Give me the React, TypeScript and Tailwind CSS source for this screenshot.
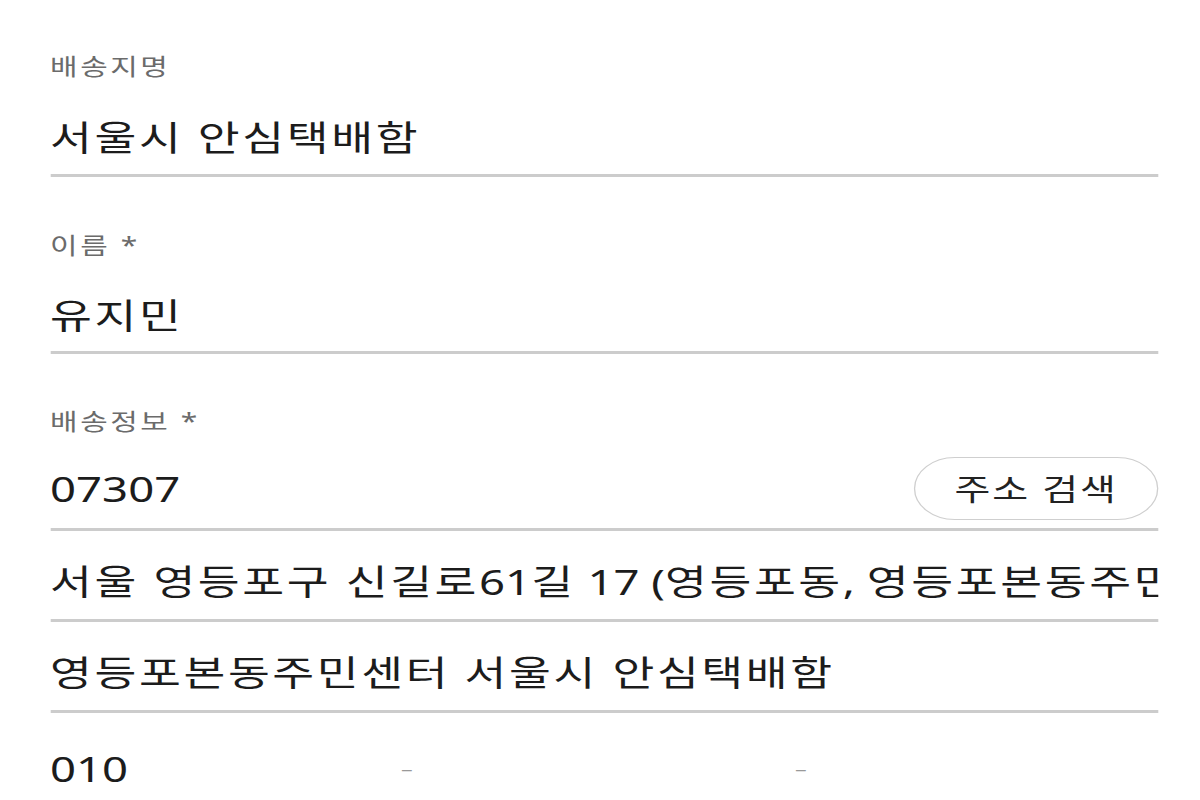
import React from "react";

const font = "font-['Noto_Sans','Noto_Sans_CJK_KR',sans-serif]";

const Label = ({ children, className = "" }: { children: React.ReactNode; className?: string }) => (
  <div className={`text-[23px] leading-[30px] tracking-[2px] text-[#6b6b6b] ${className}`}>
    {children}
  </div>
);

const Line = ({ children, className = "" }: { children: React.ReactNode; className?: string }) => (
  <div
    className={`border-b-[3px] border-[#cccccc] text-[35px] leading-[48px] tracking-[2px] text-[#1c1c1c] whitespace-nowrap overflow-hidden ${className}`}
  >
    {children}
  </div>
);

// digits and punctuation keep their natural spacing
const Plain = ({ children }: { children: React.ReactNode }) => (
  <span className="tracking-normal">{children}</span>
);

export default function App() {
  return (
    <div className="w-full overflow-hidden bg-white">
      {/* the form is laid out on a narrow column and widened to the full page */}
      <div className={`w-[923px] origin-left scale-x-[1.3] pt-[51px] pl-[38.5px] pr-[32px] ${font}`}>
        <Label>배송지명</Label>
        <Line className="mt-[33px] pb-[12px]">서울시 안심택배함</Line>

        <Label className="mt-[53px]">이름 *</Label>
        <Line className="mt-[32px] pb-[11px]">유지민</Line>

        <Label className="mt-[52px]">배송정보 *</Label>
        <div className="mt-[21px] pb-[8px] border-b-[3px] border-[#cccccc]">
          <div className="h-[63px] flex items-center justify-between">
            <span className="text-[35px] leading-[48px] text-[#1c1c1c]">07307</span>
            <button
              type="button"
              className="h-[63px] w-[188px] rounded-full border border-[#cfcfcf] bg-white text-[30px] tracking-[1.5px] text-[#222222] flex items-center justify-center"
            >
              주소 검색
            </button>
          </div>
        </div>

        <Line className="mt-[27px] pb-[13px]">
          서울 영등포구 신길로<Plain>61</Plain>길<Plain> 17 (</Plain>영등포동<Plain>, </Plain>영등포본동주민센터<Plain>)</Plain>
        </Line>
        <Line className="mt-[27px] pb-[13px]">영등포본동주민센터 서울시 안심택배함</Line>

        <div className="mt-[32px] flex items-center">
          <div className="w-[246px] border-b-[3px] border-[#cccccc] pb-[13px] text-[35px] leading-[48px] text-[#1c1c1c]">
            010
          </div>
          <div className="w-[57px] pb-[16px] flex justify-center text-[18px] text-[#999999]">–</div>
          <div className="w-[246px] h-[64px] border-b-[3px] border-[#cccccc]" />
          <div className="w-[57px] pb-[16px] flex justify-center text-[18px] text-[#999999]">–</div>
          <div className="w-[246px] h-[64px] border-b-[3px] border-[#cccccc]" />
        </div>
      </div>
    </div>
  );
}
